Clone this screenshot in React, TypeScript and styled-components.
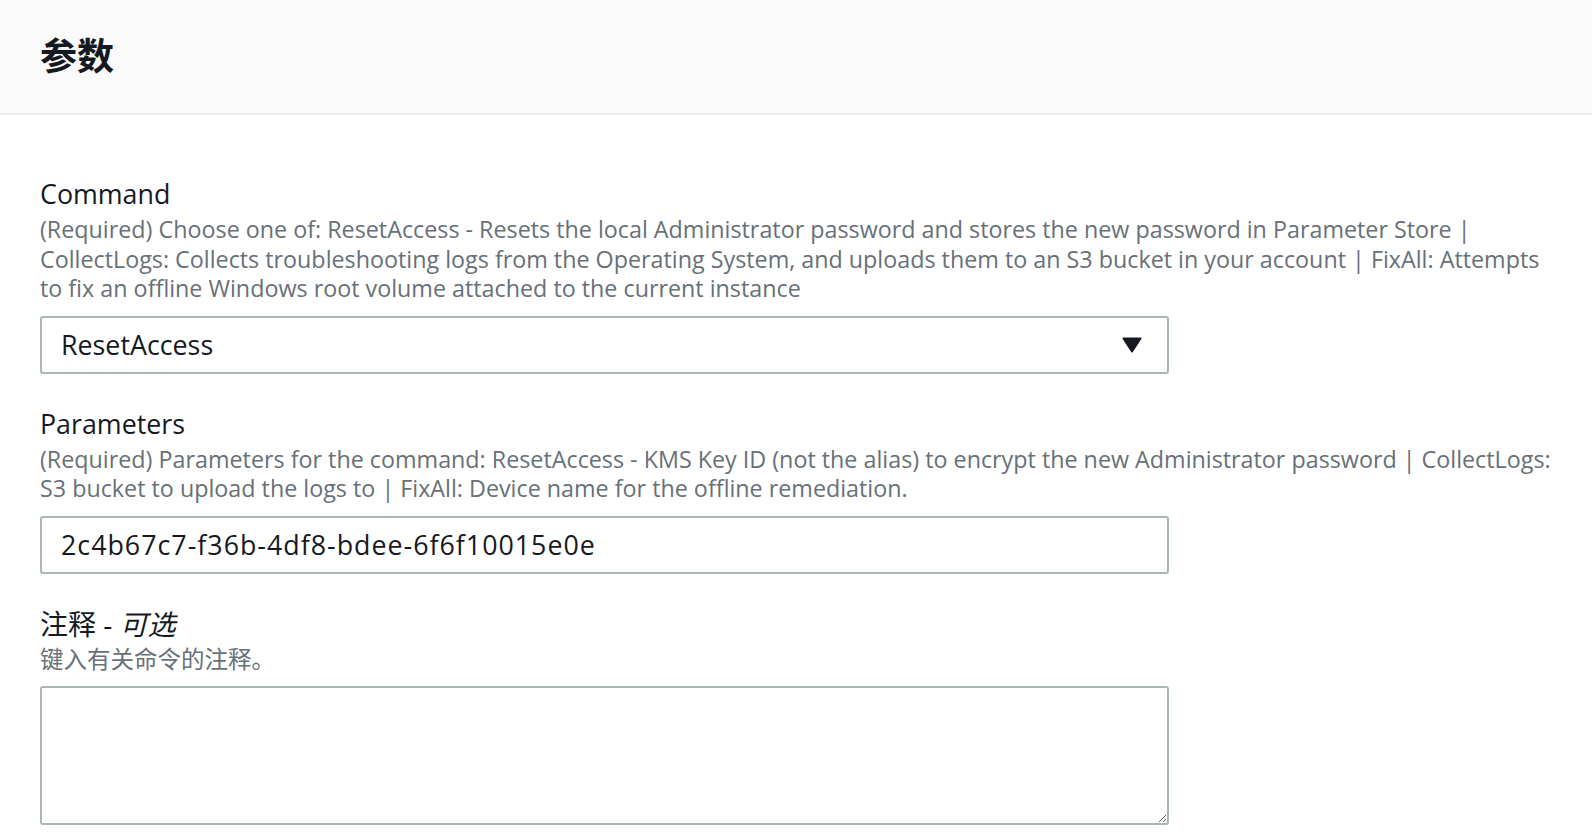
import React from "react";
import styled, { createGlobalStyle } from "styled-components";

const GlobalStyle = createGlobalStyle`
  html, body {
    margin: 0;
    padding: 0;
    background: #ffffff;
  }
  body {
    font-family: "Open Sans", "Noto Sans CJK SC", sans-serif;
    color: #16191f;
  }
  * { box-sizing: border-box; }
`;

const Page = styled.div`
  display: flex;
  flex-direction: column;
  min-height: 832px;
`;

const Header = styled.header`
  height: 115px;
  background: #fafafa;
  border-bottom: 2px solid #eaeded;
  display: flex;
  align-items: center;
  padding: 0 40px 4px;
`;

const Title = styled.h2`
  margin: 0;
  font-family: "Noto Sans CJK SC", sans-serif;
  font-size: 37px;
  font-weight: 700;
  line-height: 1;
  color: #16191f;
`;

const Form = styled.div`
  display: flex;
  flex-direction: column;
  gap: 34px;
  padding: 63px 40px 0;
`;

const Field = styled.div`
  display: flex;
  flex-direction: column;
`;

const Label = styled.label<{ $cjk?: boolean }>`
  font-size: ${(p) => (p.$cjk ? "28px" : "26.8px")};
  line-height: 32px;
  color: #16191f;
`;

const Optional = styled.i`
  font-style: italic;
`;

const Description = styled.div<{ $cjk?: boolean }>`
  margin-top: 5px;
  font-size: ${(p) => (p.$cjk ? "23.5px" : "23.3px")};
  line-height: 29.5px;
  color: #687078;
`;

const SelectBox = styled.div`
  margin-top: 12px;
  width: 1129px;
  height: 58px;
  border: 2px solid #aab7b8;
  border-radius: 3px;
  background: #ffffff;
  display: flex;
  align-items: center;
  justify-content: space-between;
  padding: 0 25px 0 19px;
  font-size: 26.8px;
  color: #16191f;
  cursor: pointer;
`;

const SelectValue = styled.span`
  line-height: 32px;
`;

const Caret = styled.svg`
  width: 20px;
  height: 16px;
  display: block;
`;

const TextInput = styled.input`
  margin-top: 12px;
  width: 1129px;
  height: 58px;
  border: 2px solid #aab7b8;
  border-radius: 3px;
  background: #ffffff;
  padding: 0 19px;
  font-family: "Open Sans", "Noto Sans CJK SC", sans-serif;
  font-size: 26.8px;
  letter-spacing: 1px;
  color: #16191f;
  outline: none;
`;

const TextArea = styled.textarea`
  margin-top: 12px;
  width: 1129px;
  height: 139px;
  border: 2px solid #aab7b8;
  border-radius: 3px;
  background: #ffffff;
  padding: 8px 19px;
  font-family: "Open Sans", "Noto Sans CJK SC", sans-serif;
  font-size: 26px;
  color: #16191f;
  resize: vertical;
  outline: none;
  display: block;
`;

export default function App() {
  return (
    <>
      <GlobalStyle />
      <Page>
        <Header>
          <Title>参数</Title>
        </Header>
        <Form>
          <Field>
            <Label>Command</Label>
            <Description>
              (Required) Choose one of: ResetAccess - Resets the local Administrator password and stores the new password in Parameter Store |
              <br />
              CollectLogs: Collects troubleshooting logs from the Operating System, and uploads them to an S3 bucket in your account | FixAll: Attempts
              <br />
              to fix an offline Windows root volume attached to the current instance
            </Description>
            <SelectBox role="combobox">
              <SelectValue>ResetAccess</SelectValue>
              <Caret viewBox="0 0 20 16" aria-hidden="true">
                <path d="M1.5 1.5 H18.5 L10 14.5 Z" fill="#16191f" stroke="#16191f" strokeWidth="2" strokeLinejoin="round" />
              </Caret>
            </SelectBox>
          </Field>
          <Field>
            <Label>Parameters</Label>
            <Description>
              (Required) Parameters for the command: ResetAccess - KMS Key ID (not the alias) to encrypt the new Administrator password | CollectLogs:
              <br />
              S3 bucket to upload the logs to | FixAll: Device name for the offline remediation.
            </Description>
            <TextInput type="text" defaultValue="2c4b67c7-f36b-4df8-bdee-6f6f10015e0e" />
          </Field>
          <Field>
            <Label $cjk>
              注释 - <Optional>可选</Optional>
            </Label>
            <Description $cjk>键入有关命令的注释。</Description>
            <TextArea />
          </Field>
        </Form>
      </Page>
    </>
  );
}
